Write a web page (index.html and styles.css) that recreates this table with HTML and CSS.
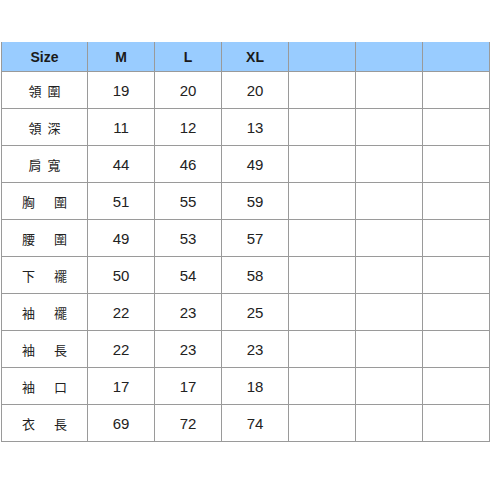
FILE: index.html
```html
<!DOCTYPE html>
<html>
<head>
<meta charset="utf-8">
<link rel="stylesheet" href="styles.css">
</head>
<body>
<table class="size-table">
  <colgroup>
    <col class="c-first"><col class="c"><col class="c"><col class="c"><col class="c"><col class="c"><col class="c">
  </colgroup>
  <thead>
    <tr class="head"><th>Size</th><th>M</th><th>L</th><th>XL</th><th></th><th></th><th></th></tr>
  </thead>
  <tbody>
    <tr><td class="lbl">領 圍</td><td>19</td><td>20</td><td>20</td><td></td><td></td><td></td></tr>
    <tr><td class="lbl">領 深</td><td>11</td><td>12</td><td>13</td><td></td><td></td><td></td></tr>
    <tr><td class="lbl">肩 寬</td><td>44</td><td>46</td><td>49</td><td></td><td></td><td></td></tr>
    <tr><td class="lbl">胸 　圍</td><td>51</td><td>55</td><td>59</td><td></td><td></td><td></td></tr>
    <tr><td class="lbl">腰 　圍</td><td>49</td><td>53</td><td>57</td><td></td><td></td><td></td></tr>
    <tr><td class="lbl">下 　襬</td><td>50</td><td>54</td><td>58</td><td></td><td></td><td></td></tr>
    <tr><td class="lbl">袖 　襬</td><td>22</td><td>23</td><td>25</td><td></td><td></td><td></td></tr>
    <tr><td class="lbl">袖 　長</td><td>22</td><td>23</td><td>23</td><td></td><td></td><td></td></tr>
    <tr><td class="lbl">袖 　口</td><td>17</td><td>17</td><td>18</td><td></td><td></td><td></td></tr>
    <tr><td class="lbl">衣 　長</td><td>69</td><td>72</td><td>74</td><td></td><td></td><td></td></tr>
  </tbody>
</table>
</body>
</html>
```
FILE: styles.css
```css
html, body {
  margin: 0;
  padding: 0;
  background: #ffffff;
}
body {
  padding: 42px 0 0 1px;
  font-family: "Liberation Sans", Arial, "Noto Sans CJK TC", sans-serif;
  color: #222222;
}
.size-table {
  border-collapse: separate;
  border-spacing: 0;
  table-layout: fixed;
  width: 488px;
  border-left: 1px solid #9a9a9a;
}
.c-first { width: 86px; }
.c { width: 67px; }
.size-table th,
.size-table td {
  padding: 0;
  text-align: center;
  vertical-align: middle;
  border-right: 1px solid #9a9a9a;
  border-bottom: 1px solid #9a9a9a;
}
.head th {
  background: #99ccff;
  height: 29px;
  font-size: 14px;
  font-weight: bold;
  color: #1a1a1a;
}
.size-table td {
  height: 36px;
  font-size: 15px;
  color: #222222;
}
.size-table td.lbl {
  font-family: "Noto Sans CJK TC", "Noto Sans CJK SC", sans-serif;
  font-size: 13px;
  word-spacing: 3px;
  color: #222222;
}
```
